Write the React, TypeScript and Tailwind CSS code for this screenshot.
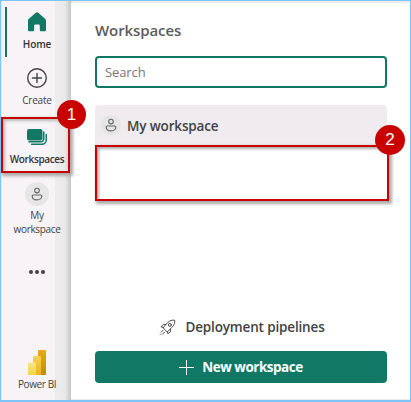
import React from "react";

function PersonIcon({ size }: { size: number }) {
  return (
    <svg width={size} height={size} viewBox="0 0 14 14" fill="none" stroke="#666" strokeWidth="1.1">
      <circle cx="7" cy="3.600" r="2.300" />
      <path d="M3.200 8h7.600c.6 0 1 .4 1 1 0 2.500-2.100 3.900-4.800 3.900S2.200 11.500 2.200 9c0-.6.4-1 1-1Z" />
    </svg>
  );
}

function HomeIcon() {
  return (
    <svg width="20" height="20" viewBox="0 0 20 20" fill="#117865">
      <path d="M8.7.8a2 2 0 0 1 2.6 0l7 6.1c.5.4.7 1 .7 1.6v9.2c0 .9-.7 1.6-1.6 1.6h-3c-.9 0-1.6-.7-1.6-1.6v-4.2c0-.5-.4-.9-.9-.9H8.1c-.5 0-.9.4-.9.9v4.2c0 .9-.7 1.6-1.6 1.6h-3c-.9 0-1.6-.7-1.6-1.6V8.500c0-.6.2-1.200.7-1.600Z" />
    </svg>
  );
}

function CreateIcon() {
  return (
    <svg width="22" height="22" viewBox="0 0 22 22" fill="none" stroke="#444" strokeWidth="1.4" strokeLinecap="round">
      <circle cx="11" cy="11" r="9.3" />
      <path d="M11 6.500v9M6.500 11h9" />
    </svg>
  );
}

function WorkspacesIcon() {
  return (
    <svg width="20" height="17" viewBox="0 0 20 17">
      <rect x="0" y="0" width="15.500" height="11.500" rx="2" fill="#117865" />
      <path d="M2 12.800h11.800a3 3 0 0 0 3-3V3M4.600 15.300h10.200a4.500 4.500 0 0 0 4.500-4.500V5.500" fill="none" stroke="#117865" strokeWidth="1.500" strokeLinecap="round" />
    </svg>
  );
}

function PowerBiIcon() {
  return (
    <svg width="18" height="25" viewBox="0 0 18 25">
      <defs>
        <linearGradient id="barBack" x2="0" y2="1"><stop stopColor="#e8aa12" /><stop offset="1" stopColor="#c98708" /></linearGradient>
        <linearGradient id="barMiddle" x2="0" y2="1"><stop stopColor="#f5d154" /><stop offset="1" stopColor="#e8b61c" /></linearGradient>
        <linearGradient id="barFront" x2="0" y2="1"><stop stopColor="#f9e589" /><stop offset="1" stopColor="#f3d341" /></linearGradient>
      </defs>
      <rect x="10" width="8" height="25" rx="1" fill="url(#barBack)" />
      <path d="M5 7a1 1 0 0 1 1-1h6a1 1 0 0 1 1 1v18H5Z" fill="url(#barMiddle)" />
      <path d="M0 13.500a1 1 0 0 1 1-1h6a1 1 0 0 1 1 1V25H1a1 1 0 0 1-1-1Z" fill="url(#barFront)" />
    </svg>
  );
}

function RocketIcon() {
  return (
    <svg width="17" height="17" viewBox="0 0 17 17" fill="none" stroke="#4d4d4d" strokeWidth="1" strokeLinejoin="round" strokeLinecap="round">
      <path d="M4.300 8.500 8.700 3.500C10.700 1.500 13.200.9 15.700 1.200c.4 2.200-.4 4.800-2.300 6.700L8.500 12.700Z" />
      <circle cx="10.900" cy="5.900" r="1.500" />
      <path d="M6.800 5.600 4.500 5.300 2 7.900l2.300.6M11.300 10.100l.3 2.400-2.700 2.400-.4-2.200M3.900 11.400l-1.700 1.700M5.600 13.100l-2.100 2.100M1.200 15.500l.5-.5" />
    </svg>
  );
}

function Badge({ children, className }: { children: React.ReactNode; className: string }) {
  return (
    <span className={`absolute flex items-center justify-center rounded-full bg-[#c90000] font-['Liberation_Sans',sans-serif] text-white ${className}`}>
      {children}
    </span>
  );
}

const label = "whitespace-nowrap text-center text-[10px] leading-[14px]";

export default function App() {
  return (
    <div className="relative flex h-[402px] w-[411px] overflow-hidden border border-b-2 border-[#7fc4f7] bg-[#ececec] font-['Open_Sans','Noto_Sans',sans-serif] text-[#424242]">
      <nav className="flex w-[70px] shrink-0 flex-col overflow-hidden bg-[linear-gradient(to_right,#e9e6ea_0,#f7f3f7_2px,#f7f3f7_54px,#ededed_54px,#e9e9e9_64px,#c6c6c6_70px)]">
        <div className="relative flex h-[55px] flex-col items-center pt-[11px] pl-[2px]">
          <span className="absolute top-[6px] left-[4px] h-[50px] w-[2px] bg-[#117865]" />
          <HomeIcon />
          <span className={`${label} mt-[5px] font-semibold tracking-[-0.1px] text-[#333]`}>Home</span>
        </div>
        <div className="flex h-[61px] flex-col items-center pt-[11px] pl-[2px]">
          <CreateIcon />
          <span className={`${label} mt-[4px] tracking-[-0.2px]`}>Create</span>
        </div>
        <div className="flex h-[61px] flex-col items-center pt-[12px] pl-[2px]">
          <WorkspacesIcon />
          <span className={`${label} mt-[6px] font-semibold tracking-[-0.35px] text-[#333]`}>Workspaces</span>
        </div>
        <div className="flex h-[76px] flex-col items-center pt-[4px] pl-[2px]">
          <span className="flex size-6 shrink-0 items-center justify-center rounded-full bg-[#e6e6e6]"><PersonIcon size={14} /></span>
          <span className={`${label} mt-[2px] tracking-[-0.35px]`}>My<br />workspace</span>
        </div>
        <div className="flex h-[36px] items-center justify-center gap-[2px] pl-[2px]">
          <span className="size-1 rounded-full bg-[#424242]" />
          <span className="size-1 rounded-full bg-[#424242]" />
          <span className="size-1 rounded-full bg-[#424242]" />
        </div>
        <div className="mt-auto flex h-[50px] flex-col pl-[17px]">
          <div className="pl-[10px]"><PowerBiIcon /></div>
          <span className={`${label} mt-[2px] text-left tracking-[-0.4px]`}>Power BI</span>
        </div>
      </nav>
      <main className="mt-[2px] mb-px flex min-w-0 flex-1 flex-col rounded-tl-[2px] bg-white pr-[23px] pl-6">
        <h1 className="mt-[15px] h-[24px] text-[15px] leading-[24px] font-semibold tracking-[-0.1px] text-[#5c5c5c]">Workspaces</h1>
        <input aria-label="Search" placeholder="Search" className="mt-[14px] h-8 w-full rounded-[4px] border-2 border-[#117865] bg-white px-2 text-[13px] tracking-[-0.1px] outline-none placeholder:text-[#777]" />
        <div className="mt-[17px] flex h-[40px] items-center rounded-t-[4px] bg-[#f0ebef] pl-[6px]">
          <span className="flex size-5 items-center justify-center rounded-full bg-[#e5e5e5]"><PersonIcon size={14} /></span>
          <span className="mt-[2px] ml-[6px] text-[13.5px] leading-5 font-semibold tracking-[-0.15px]">My workspace</span>
        </div>
        <div className="mr-[-2px] h-[56px] border-2 border-[#c90000] shadow-[2px_2px_3px_1px_#aaa,inset_2px_2px_3px_#aaa]" />
        <div className="mt-auto flex h-5 items-center justify-center gap-[9px] pl-[2px]">
          <RocketIcon />
          <span className="text-[13.5px] font-semibold tracking-[-0.15px]">Deployment pipelines</span>
        </div>
        <button className="mt-[14px] mb-[16px] flex h-8 shrink-0 items-center justify-center gap-2 rounded-[4px] bg-[#117865] text-[13.5px] font-bold tracking-[-0.5px] text-white">
          <svg width="15" height="15" viewBox="0 0 15 15" fill="none" stroke="white" strokeWidth="1"><path d="M7.500 0v15M0 7.500h15" /></svg>
          New workspace
        </button>
      </main>
      <div className="absolute top-[116px] left-0 h-[56px] w-[69px] border-2 border-[#c90000] shadow-[2px_2px_3px_1px_#aaa,inset_2px_2px_3px_#bbb]" />
      <Badge className="top-[99px] left-[56px] size-[29px] text-[17px]">1</Badge>
      <Badge className="top-[124px] left-[374px] size-[30px] text-[17px]">2</Badge>
    </div>
  );
}
